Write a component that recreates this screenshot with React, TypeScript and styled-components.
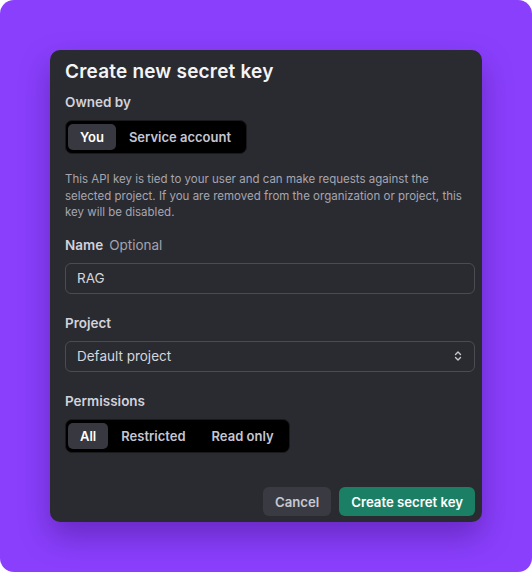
import React from 'react';
import styled, { createGlobalStyle } from 'styled-components';

const GlobalStyle = createGlobalStyle`
    html, body {
        margin: 0;
        padding: 0;
        background: #ffffff;
    }
    * {
        box-sizing: border-box;
    }
`

const Frame = styled.div`
    width: 532px;
    height: 572px;
    background: #8a3ffc;
    border-radius: 14px;
    padding: 50px 50px 0 50px;
    font-family: Inter, 'Noto Sans', sans-serif;
`
const Card = styled.div`
    width: 432px;
    height: 472px;
    background: #2a2b30;
    border-radius: 10px;
    padding: 11px 7px 0 15px;
    display: flex;
    flex-direction: column;
    box-shadow: 0 14px 30px rgba(40, 0, 90, 0.35);
`
const Title = styled.h2`
    margin: 0;
    font-size: 19px;
    line-height: 22px;
    font-weight: 600;
    letter-spacing: 0.2px;
    color: #f4f4f6;
`
const Label = styled.div<{ gap?: number }>`
    margin-top: ${props => props.gap ?? 0}px;
    font-size: 13.5px;
    line-height: 18px;
    font-weight: 600;
    color: #d2d2da;
`
const Optional = styled.span`
    font-weight: 400;
    color: #a3a3ad;
    margin-left: 6px;
`
const Segmented = styled.div`
    margin-top: 9px;
    align-self: flex-start;
    display: flex;
    padding: 3px 2px;
    background: #000000;
    border: 1px solid #1a1a1d;
    border-radius: 7px;
    height: 34px;
`
const Segment = styled.div<{ active?: boolean }>`
    display: flex;
    align-items: center;
    padding: 0 ${props => props.active ? 12 : 13}px;
    border-radius: 5px;
    font-size: 13px;
    font-weight: 600;
    color: ${props => props.active ? '#ffffff' : '#c6c6d0'};
    background: ${props => props.active ? '#373840' : 'transparent'};
`
const Description = styled.p`
    margin: 17px 0 0 0;
    width: 400px;
    font-size: 11.5px;
    line-height: 16.5px;
    color: #a6a6b0;
`
const Field = styled.div`
    margin-top: 9px;
    height: 31px;
    width: 410px;
    border: 1px solid #4a4b55;
    border-radius: 6px;
    display: flex;
    align-items: center;
    justify-content: space-between;
    padding: 0 12px 0 11px;
    font-size: 13.5px;
    color: #d6d6de;
`
const Footer = styled.div`
    margin-top: auto;
    margin-bottom: 6px;
    width: 410px;
    display: flex;
    justify-content: flex-end;
    gap: 8px;
`
const Button = styled.button<{ primary?: boolean }>`
    height: 29px;
    border: none;
    border-radius: 6px;
    padding: 0 12px;
    font-family: inherit;
    font-size: 13.2px;
    font-weight: 600;
    color: ${props => props.primary ? '#ffffff' : '#c8c8d0'};
    background: ${props => props.primary ? '#1a7f64' : '#3a3b42'};
`

const UpDown = () => (
    <svg width="8" height="12" viewBox="0 0 8 12" fill="none">
        <path d="M1.5 4.5 L4 2 L6.5 4.5" stroke="#c8c8d0" strokeWidth="1.4" strokeLinecap="round" strokeLinejoin="round" />
        <path d="M1.5 7.5 L4 10 L6.5 7.5" stroke="#c8c8d0" strokeWidth="1.4" strokeLinecap="round" strokeLinejoin="round" />
    </svg>
)

const App: React.FC = () => {
    return (
        <>
            <GlobalStyle />
            <Frame>
                <Card>
                    <Title>Create new secret key</Title>
                    <Label gap={10}>Owned by</Label>
                    <Segmented>
                        <Segment active>You</Segment>
                        <Segment>Service account</Segment>
                    </Segmented>
                    <Description>
                        This API key is tied to your user and can make requests against the selected project. If you are removed from the organization or project, this key will be disabled.
                    </Description>
                    <Label gap={15}>Name<Optional>Optional</Optional></Label>
                    <Field>RAG</Field>
                    <Label gap={20}>Project</Label>
                    <Field>
                        Default project
                        <UpDown />
                    </Field>
                    <Label gap={20}>Permissions</Label>
                    <Segmented>
                        <Segment active>All</Segment>
                        <Segment>Restricted</Segment>
                        <Segment>Read only</Segment>
                    </Segmented>
                    <Footer>
                        <Button>Cancel</Button>
                        <Button primary>Create secret key</Button>
                    </Footer>
                </Card>
            </Frame>
        </>
    )
}

export default App;
